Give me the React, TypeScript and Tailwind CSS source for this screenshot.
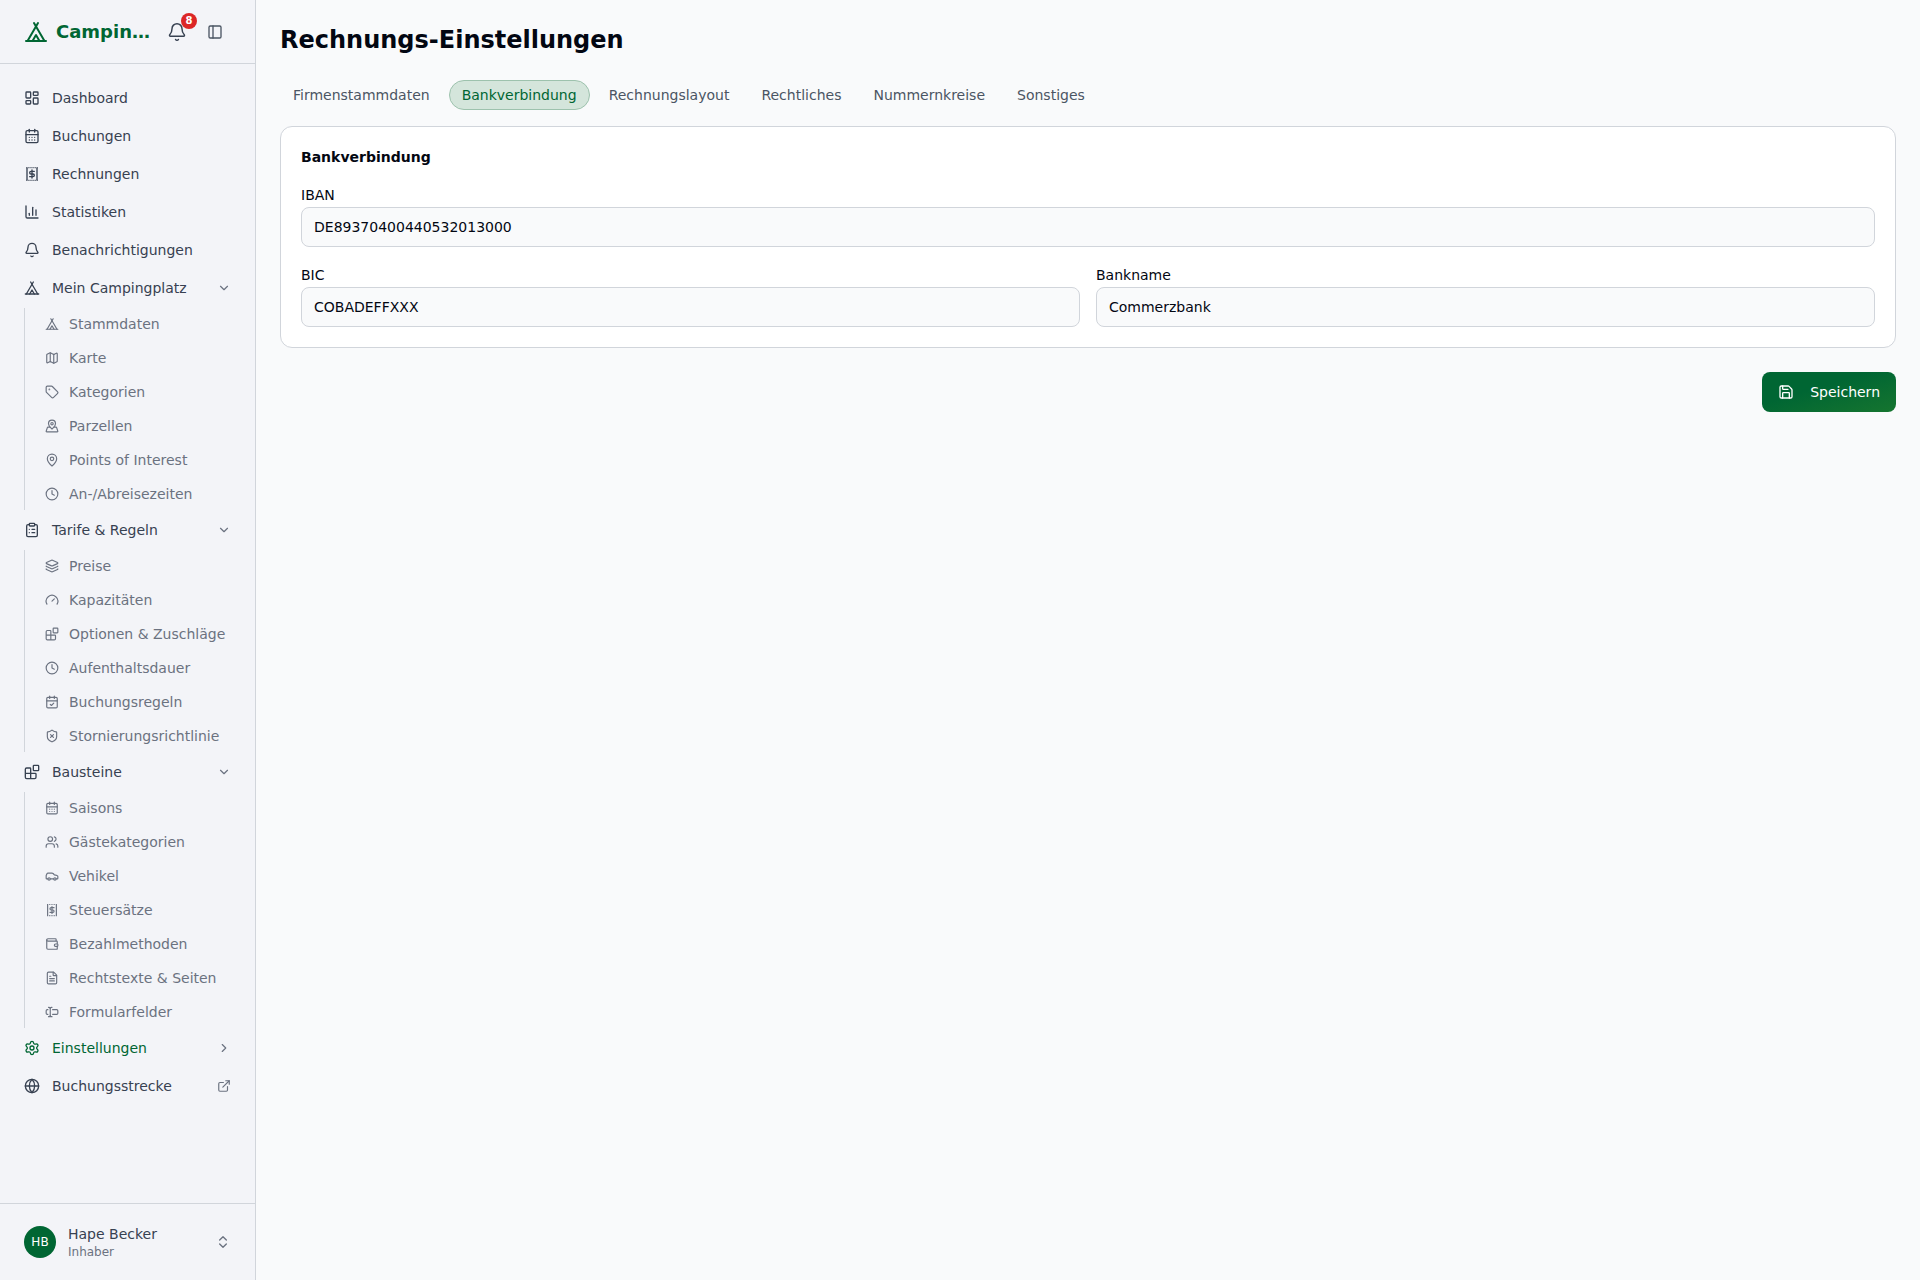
import React from 'react';
import {
  Bell,
  Blocks,
  CalendarCheck,
  CalendarDays,
  Car,
  ChartColumn,
  ChevronDown,
  ChevronRight,
  ChevronsUpDown,
  ClipboardList,
  Clock,
  ExternalLink,
  FileText,
  Gauge,
  Globe,
  Layers,
  LayoutDashboard,
  Map,
  MapPin,
  MapPinned,
  PanelLeft,
  Save,
  Settings,
  ShieldX,
  Tag,
  Tent,
  TextCursorInput,
  Users,
  Wallet,
} from 'lucide-react';

const font = "font-['DejaVu_Sans',sans-serif]";

// perforated receipt with a dollar sign, not in lucide in this form
function ReceiptDollar({ className }: { className?: string }) {
  return (
    <svg viewBox="0 0 24 24" fill="none" stroke="currentColor" strokeWidth={2} className={className}>
      <path d="M4.5 2.5v19M19.5 2.5v19" />
      <path d="M3.5 2.5h17M3.5 21.5h17" strokeDasharray="1.6 1.5" />
      <path d="M15.5 8h-5a2 2 0 0 0 0 4h3a2 2 0 0 1 0 4h-5M12 6v12" strokeLinecap="round" />
    </svg>
  );
}

function NavItem({ icon: Icon, label, active, right }: any) {
  return (
    <div className={`flex items-center h-9 px-6 text-sm ${active ? 'text-[#006633]' : 'text-[#374151]'}`}>
      <Icon className="w-4 h-4 mr-3 shrink-0" />
      <span className="flex-1">{label}</span>
      {right}
    </div>
  );
}

function SubGroup({ items }: { items: [any, string][] }) {
  return (
    <div className="ml-6 border-l border-[#d1d5db] pl-[20px] flex flex-col gap-0.5">
      {items.map(([Icon, label]) => (
        <div key={label} className="flex items-center h-8 text-sm text-[#6b7280]">
          <Icon className="w-[14px] h-[14px] mr-[10px] shrink-0" />
          <span>{label}</span>
        </div>
      ))}
    </div>
  );
}

function Field({ label, value }: { label: string; value: string }) {
  return (
    <div className="flex-1">
      <div className="text-sm text-[#030712] leading-5 mb-0.5">{label}</div>
      <div className="h-10 flex items-center px-3 text-sm text-[#030712] bg-[#f9fafb] border border-[#d1d5db] rounded-lg">
        {value}
      </div>
    </div>
  );
}

const tabs = ['Firmenstammdaten', 'Bankverbindung', 'Rechnungslayout', 'Rechtliches', 'Nummernkreise', 'Sonstiges'];

export default function App() {
  const down = <ChevronDown className="w-3.5 h-3.5 text-[#6b7280]" />;
  return (
    <div className={`flex h-[1280px] bg-[#f9fafb] overflow-hidden ${font}`}>
      <aside className="w-[256px] shrink-0 flex flex-col bg-[#f3f4f8] border-r border-[#d1d5db]">
        <div className="h-[64px] flex items-center pl-6 border-b border-[#d1d5db] shrink-0">
          <Tent className="w-6 h-6 text-[#006633] mr-2 shrink-0" />
          <span className="w-[96px] text-lg font-bold text-[#006633] mr-[15px] whitespace-nowrap">Campin…</span>
          <div className="relative mr-5">
            <Bell className="w-5 h-5 text-[#374151]" strokeWidth={1.75} />
            <span className="absolute -top-[9px] -right-[10px] w-4 h-4 rounded-full bg-[#dc2626] text-white text-[10px] font-bold flex items-center justify-center">8</span>
          </div>
          <PanelLeft className="w-4 h-4 text-[#4b5563]" />
        </div>
        <nav className="pt-4 flex-1 flex flex-col gap-0.5">
          <NavItem icon={LayoutDashboard} label="Dashboard" />
          <NavItem icon={CalendarDays} label="Buchungen" />
          <NavItem icon={ReceiptDollar} label="Rechnungen" />
          <NavItem icon={ChartColumn} label="Statistiken" />
          <NavItem icon={Bell} label="Benachrichtigungen" />
          <NavItem icon={Tent} label="Mein Campingplatz" right={down} />
          <SubGroup
            items={[
              [Tent, 'Stammdaten'],
              [Map, 'Karte'],
              [Tag, 'Kategorien'],
              [MapPinned, 'Parzellen'],
              [MapPin, 'Points of Interest'],
              [Clock, 'An-/Abreisezeiten'],
            ]}
          />
          <NavItem icon={ClipboardList} label="Tarife & Regeln" right={down} />
          <SubGroup
            items={[
              [Layers, 'Preise'],
              [Gauge, 'Kapazitäten'],
              [Blocks, 'Optionen & Zuschläge'],
              [Clock, 'Aufenthaltsdauer'],
              [CalendarCheck, 'Buchungsregeln'],
              [ShieldX, 'Stornierungsrichtlinie'],
            ]}
          />
          <NavItem icon={Blocks} label="Bausteine" right={down} />
          <SubGroup
            items={[
              [CalendarDays, 'Saisons'],
              [Users, 'Gästekategorien'],
              [Car, 'Vehikel'],
              [ReceiptDollar, 'Steuersätze'],
              [Wallet, 'Bezahlmethoden'],
              [FileText, 'Rechtstexte & Seiten'],
              [TextCursorInput, 'Formularfelder'],
            ]}
          />
          <NavItem icon={Settings} label="Einstellungen" active right={<ChevronRight className="w-3.5 h-3.5 text-[#6b7280]" />} />
          <NavItem icon={Globe} label="Buchungsstrecke" right={<ExternalLink className="w-3.5 h-3.5 text-[#6b7280]" />} />
        </nav>
        <div className="h-[77px] flex items-center px-6 border-t border-[#d1d5db] shrink-0">
          <div className="w-8 h-8 rounded-full bg-[#006633] text-white text-xs flex items-center justify-center mr-3">HB</div>
          <div className="flex-1">
            <div className="text-sm text-[#374151] leading-5">Hape Becker</div>
            <div className="text-xs text-[#6b7280] leading-4">Inhaber</div>
          </div>
          <ChevronsUpDown className="w-4 h-4 text-[#6b7280]" />
        </div>
      </aside>
      <main className="flex-1 px-6 pt-6">
        <h1 className="text-2xl font-bold text-[#030712] mb-6">Rechnungs-Einstellungen</h1>
        <div className="flex items-center gap-1.5 mb-4">
          {tabs.map((t) => (
            <div
              key={t}
              className={`h-[30px] px-3 flex items-center rounded-full text-sm border ${
                t === 'Bankverbindung' ? 'bg-[#d4e5db] border-[#9dc2ad] text-[#006633]' : 'border-transparent text-[#4b5563]'
              }`}
            >
              {t}
            </div>
          ))}
        </div>
        <div className="bg-white border border-[#d1d5db] rounded-xl p-5">
          <div className="text-sm font-bold text-[#030712] leading-5 mb-[18px]">Bankverbindung</div>
          <div className="flex flex-col gap-[18px]">
            <Field label="IBAN" value="DE89370400440532013000" />
            <div className="flex gap-4">
              <Field label="BIC" value="COBADEFFXXX" />
              <Field label="Bankname" value="Commerzbank" />
            </div>
          </div>
        </div>
        <div className="flex justify-end mt-6">
          <button className="h-10 px-4 flex items-center gap-4 rounded-lg text-sm text-white bg-gradient-to-br from-[#006633] from-40% to-[#15752f]">
            <Save className="w-4 h-4" />
            Speichern
          </button>
        </div>
      </main>
    </div>
  );
}
